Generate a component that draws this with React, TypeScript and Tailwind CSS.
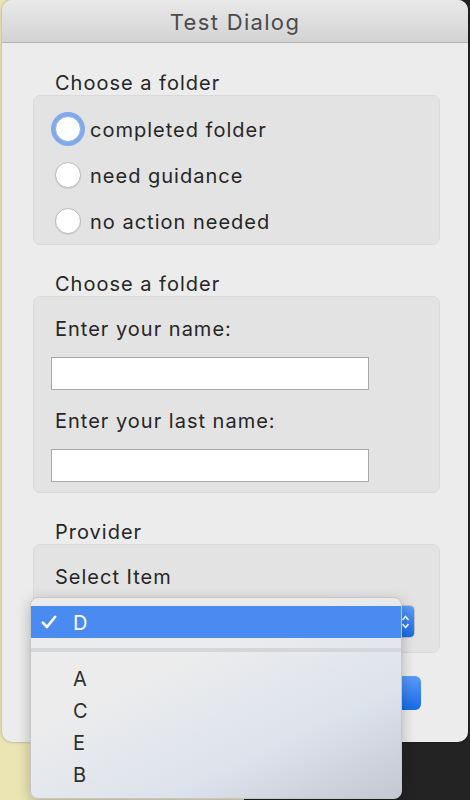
import React from 'react';

const font = { fontFamily: 'Inter, "Noto Sans", sans-serif' };

const Radio: React.FC<{ label: string; focused?: boolean }> = ({ label, focused }) => (
  <label className="flex h-[46px] items-center pl-[21px]">
    <span
      className={`box-border h-[26px] w-[26px] rounded-full bg-white ${
        focused
          ? 'shadow-[0_0_0_4px_#82a9ea] border border-[#8fb0e6]'
          : 'border border-[#b9b9b9] shadow-[0_1px_1px_rgba(0,0,0,0.08)]'
      }`}
    ></span>
    <span className="ml-[9px] pt-[2px] text-[20px] leading-[24px] tracking-[0.05em] text-[#262626]">{label}</span>
  </label>
);

const SectionLabel: React.FC<{ text: string }> = ({ text }) => (
  <div className="pl-[22px] pt-[2px] text-[20px] leading-[24px] tracking-[0.05em] text-[#262626]">{text}</div>
);

const FieldLabel: React.FC<{ text: string }> = ({ text }) => (
  <div className="pl-[21px] pt-[2px] text-[20px] leading-[24px] tracking-[0.05em] text-[#262626]">{text}</div>
);

const Group: React.FC<{ children: React.ReactNode; className?: string }> = ({ children, className }) => (
  <div className={`rounded-[7px] border border-[#dadada] bg-[#e3e3e3] ${className ?? ''}`}>{children}</div>
);

const TextBox: React.FC = () => (
  <div className="ml-[17px] h-[33px] w-[318px] border border-[#a8a8a8] bg-white"></div>
);

export default function App() {
  const menuItems = ['A', 'C', 'E', 'B'];

  return (
    <div
      className="relative h-[800px] w-[470px] overflow-hidden bg-[linear-gradient(to_right,#ebe5b4_52%,#232323_52%)]"
      style={font}
    >
      {/* dark corner behind window top-right */}
      <div className="absolute right-0 top-0 h-[20px] w-[20px] bg-[#232323]"></div>

      {/* dialog window */}
      <div className="relative ml-[2px] flex h-[742px] w-[466px] flex-col overflow-hidden rounded-[10px] bg-[#ececec] shadow-[0_0_3px_rgba(0,0,0,0.35)]">
        <div className="flex h-[43px] shrink-0 items-center justify-center border-b border-[#b4b4b4] bg-[linear-gradient(to_bottom,#e9e9e9,#d3d3d3)]">
          <span className="pt-[2px] text-[22px] leading-[26px] tracking-[0.06em] text-[#4b4b4b]">Test Dialog</span>
        </div>

        <div className="flex flex-col pl-[31px] pr-[28px] pt-[26px]">
          <SectionLabel text="Choose a folder" />
          <Group className="pb-[0px] pt-[10px]">
            <Radio label="completed folder" focused />
            <Radio label="need guidance" />
            <Radio label="no action needed" />
          </Group>

          <div className="h-[25px]"></div>
          <SectionLabel text="Choose a folder" />
          <Group className="pb-[10px] pt-[18px]">
            <FieldLabel text="Enter your name:" />
            <div className="h-[16px]"></div>
            <TextBox />
            <div className="h-[17px]"></div>
            <FieldLabel text="Enter your last name:" />
            <div className="h-[16px]"></div>
            <TextBox />
          </Group>

          <div className="h-[25px]"></div>
          <SectionLabel text="Provider" />
          <Group className="pb-[14px] pt-[18px]">
            <FieldLabel text="Select Item" />
            <div className="h-[16px]"></div>
            <div className="ml-[17px] flex h-[33px] w-[364px] overflow-hidden rounded-[5px] border border-[#c2c2c2] bg-white">
              <span className="flex-1"></span>
              <span className="flex w-[18px] items-center justify-center bg-[linear-gradient(to_bottom,#5d9cf7,#1a6ae6)]">
                <svg width="9" height="18" viewBox="0 0 9 18" fill="none" stroke="white" strokeWidth="1.6">
                  <path d="M1.5 7 L4.5 3.5 L7.5 7" />
                  <path d="M1.5 11 L4.5 14.5 L7.5 11" />
                </svg>
              </span>
            </div>
          </Group>

          <div className="mt-[23px] flex justify-end pr-[19px]">
            <button className="h-[34px] w-[80px] rounded-[6px] bg-[linear-gradient(to_bottom,#5b9bf8,#166ae8)] text-[20px] text-white">
              OK
            </button>
          </div>
        </div>
      </div>

      {/* open popup menu */}
      <div className="absolute left-[30px] top-[597px] h-[202px] w-[372px] rounded-[8px] border border-[#c6c6c6] bg-[linear-gradient(155deg,#ececec_35%,#dde3ec_70%,#c2c7d2_100%)] pb-[7px] pt-[8px] shadow-[0_4px_14px_rgba(0,0,0,0.25)]">
        <div className="flex h-[32px] items-center bg-[#4a8bf2] text-white">
          <svg className="ml-[10px]" width="16" height="14" viewBox="0 0 16 14" fill="none" stroke="white" strokeWidth="2.6" strokeLinecap="round" strokeLinejoin="round">
            <path d="M1.8 7.6 L6 12 L14.2 1.8" />
          </svg>
          <span className="ml-[16px] pt-[2px] text-[20px] leading-[24px]">D</span>
        </div>
        <div className="mt-[10px] h-[4px] bg-[#d5d6d8]"></div>
        <div className="h-[10px]"></div>
        {menuItems.map((item) => (
          <div key={item} className="flex h-[32px] items-center pl-[42px] pt-[2px] text-[20px] leading-[24px] text-[#2e2e2e]">
            {item}
          </div>
        ))}
      </div>
    </div>
  );
}
